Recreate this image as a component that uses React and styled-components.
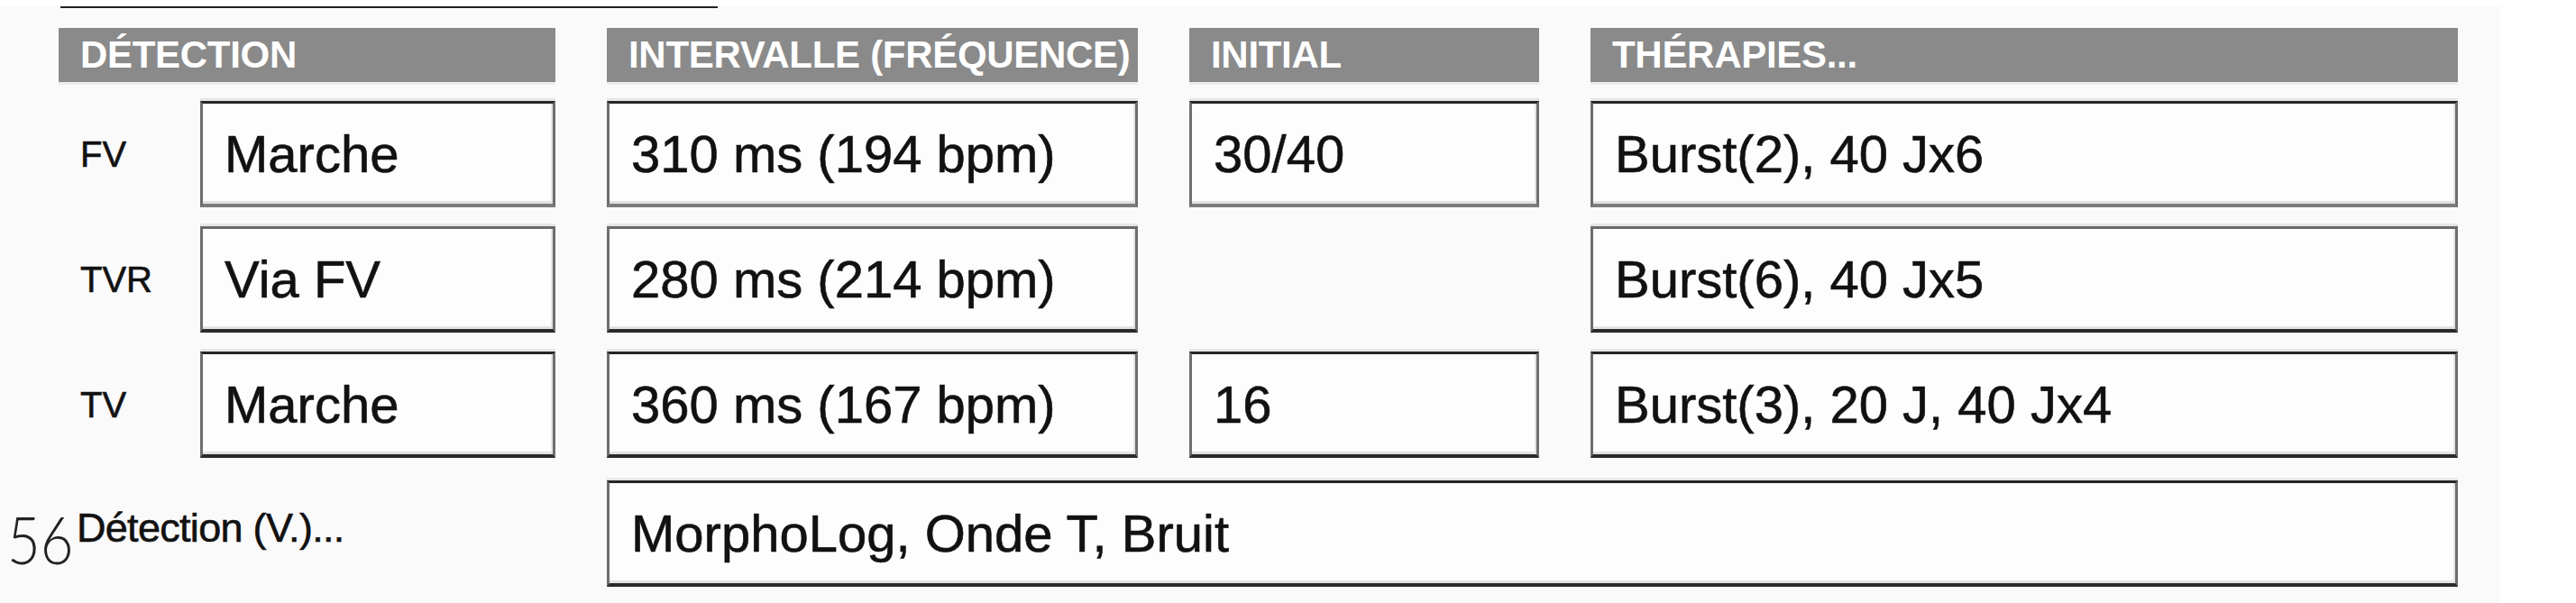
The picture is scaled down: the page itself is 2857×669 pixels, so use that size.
import styled, { createGlobalStyle } from "styled-components";

const GlobalStyle = createGlobalStyle`
  html, body {
    margin: 0;
    padding: 0;
    background: #ffffff;
  }
  * {
    box-sizing: border-box;
  }
`;

const Page = styled.div`
  width: 2773px;
  min-height: 669px;
  padding-left: 65px;
  background: #fafafa;
  font-family: "Liberation Sans", Arial, sans-serif;
  color: #111;
`;

const Rule = styled.div`
  width: 729px;
  height: 2px;
  margin: 7px 0 0 2px;
  background: #222;
`;

const Table = styled.div`
  display: flex;
  flex-direction: column;
  gap: 21px;
  margin-top: 22px;
`;

const Row = styled.div`
  display: grid;
  grid-template-columns: 551px 589px 388px 962px;
  column-gap: 57px;
  height: ${(p) => (p.$head ? "60px" : "118px")};
  margin-top: ${(p) => (p.$extra ? "4px" : "0")};
`;

const HeadCell = styled.div`
  display: flex;
  align-items: center;
  padding-left: 24px;
  background: #8a8a8a;
  box-shadow: 0 3px 0 #ececec;
  color: #fff;
  font-weight: 700;
  font-size: 42px;
  letter-spacing: -0.3px;
  white-space: nowrap;
  overflow: hidden;
`;

const DetectCell = styled.div`
  display: flex;
  align-items: stretch;
`;

const Label = styled.div`
  width: 157px;
  flex: none;
  display: flex;
  align-items: center;
  padding-left: 24px;
  font-size: 40px;
  -webkit-text-stroke: 0.6px #111;
`;

const Box = styled.div`
  flex: 1;
  display: flex;
  align-items: center;
  padding-left: 24px;
  background: #fdfdfd;
  border: 3px solid #6e6e6e;
  border-top-color: ${(p) => (p.$soft ? "#6a6a6a" : "#262626")};
  border-bottom-color: ${(p) => (p.$grey ? "#7c7c7c" : "#2a2a2a")};
  border-bottom-width: 4px;
  box-shadow: inset -2px -3px 0 #e3e3e3, 0 -3px 0 #e6e6e6;
  font-size: 58px;
  white-space: nowrap;
  -webkit-text-stroke: 0.6px #111;
  grid-column: ${(p) => p.$span || "auto"};
`;

const Empty = styled.div``;

const FootLabel = styled.div`
  display: flex;
  align-items: flex-start;
  padding-top: 30px;
  gap: 7px;
`;

const PageNum = styled.span`
  flex: none;
  width: 70px;
  margin-left: -57px;
  margin-top: -1px;
  font-family: Lato, "Open Sans", sans-serif;
  font-weight: 300;
  font-size: 72px;
  line-height: 1;
  color: #222;
  display: inline-block;
  transform: scaleX(0.88);
  transform-origin: left center;
  white-space: nowrap;
`;

const FootText = styled.span`
  font-size: 45px;
  letter-spacing: -0.7px;
  line-height: 1;
  -webkit-text-stroke: 0.6px #111;
  white-space: nowrap;
`;

const headers = ["DÉTECTION", "INTERVALLE (FRÉQUENCE)", "INITIAL", "THÉRAPIES..."];

const rows = [
  {
    label: "FV",
    detect: "Marche",
    interval: "310 ms (194 bpm)",
    initial: "30/40",
    therapy: "Burst(2), 40 Jx6",
    grey: true,
  },
  {
    label: "TVR",
    detect: "Via FV",
    interval: "280 ms (214 bpm)",
    initial: null,
    therapy: "Burst(6), 40 Jx5",
    soft: true,
  },
  {
    label: "TV",
    detect: "Marche",
    interval: "360 ms (167 bpm)",
    initial: "16",
    therapy: "Burst(3), 20 J, 40 Jx4",
  },
];

export default function App() {
  return (
    <>
      <GlobalStyle />
      <Page>
        <Rule />
        <Table>
          <Row $head>
            {headers.map((h) => (
              <HeadCell key={h}>{h}</HeadCell>
            ))}
          </Row>
          {rows.map((r) => (
            <Row key={r.label}>
              <DetectCell>
                <Label>{r.label}</Label>
                <Box $grey={r.grey} $soft={r.soft}>
                  {r.detect}
                </Box>
              </DetectCell>
              <Box $grey={r.grey} $soft={r.soft}>
                {r.interval}
              </Box>
              {r.initial ? (
                <Box $grey={r.grey} $soft={r.soft}>
                  {r.initial}
                </Box>
              ) : (
                <Empty />
              )}
              <Box $grey={r.grey} $soft={r.soft}>
                {r.therapy}
              </Box>
            </Row>
          ))}
          <Row $extra>
            <FootLabel>
              <PageNum>56</PageNum>
              <FootText>Détection (V.)...</FootText>
            </FootLabel>
            <Box $span="2 / -1">MorphoLog, Onde T, Bruit</Box>
          </Row>
        </Table>
      </Page>
    </>
  );
}
